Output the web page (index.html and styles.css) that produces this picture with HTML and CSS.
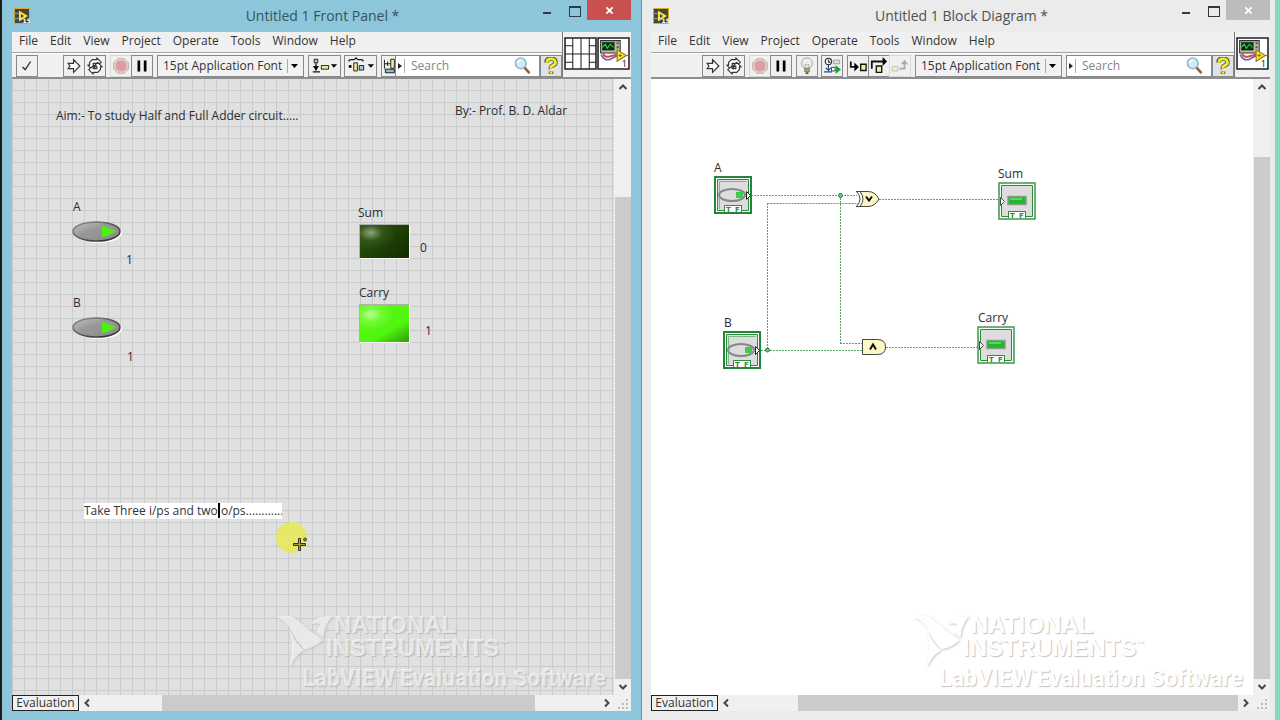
FILE: index.html
```html
<!DOCTYPE html>
<html lang="en">
<head>
<meta charset="utf-8">
<title>Untitled 1</title>
<link rel="stylesheet" href="styles.css">
</head>
<body>
<svg class="defs" aria-hidden="true">
  <defs>
    <linearGradient id="ovalFill" x1="0" y1="0" x2="1" y2="1"><stop offset="0" stop-color="#c4c4c4"/><stop offset=".4" stop-color="#999"/><stop offset="1" stop-color="#8a8a8a"/></linearGradient>
    <linearGradient id="ovalRim" x1="0" y1="0" x2="1" y2="1"><stop offset="0" stop-color="#909090"/><stop offset="1" stop-color="#222"/></linearGradient>
    <symbol id="app" viewBox="0 0 16 16"><path fill="#d9a92c" d="M0 0h16v16H0z"/><path fill="#454437" d="M1 1h14v14H1z"/><path stroke="#5f93a5" stroke-width="1.500" d="M0 5.500h6M0 10.500h6"/><path fill="#f8df4c" d="M5 2.500l9 5.500-9 5.500z"/><path fill="#454437" d="M7 6l3 2-3 2z"/><text x="8.500" y="14.500" class="tiny light">15</text></symbol>
    <symbol id="check" viewBox="0 0 20 20"><path fill="none" stroke="#333" stroke-width="1.500" d="M5 11l3 3 6-9"/></symbol>
    <symbol id="run" viewBox="0 0 20 20"><path fill="#fff" stroke="#333" stroke-width="1.300" d="M3.500 7h6V3l7 7-7 7v-4h-6l2-3z"/></symbol>
    <symbol id="loop" viewBox="0 0 20 20"><g fill="#fff" stroke="#333" stroke-width="1.300" stroke-linejoin="round"><path d="M4 9V6l3-3h5V1l5 5-5 4V7H8v3h3l-4 4-5-5z"/><path d="M16 11v3l-3 3H8v2l-5-5 5-4v3h4v-3H9l4-4 5 5z"/></g></symbol>
    <symbol id="stop" viewBox="0 0 20 20"><path fill="#e6e0e0" stroke="#b09a9a" d="M6.500 2h7L18 6.500v7L13.500 18h-7L2 13.500v-7z"/><path fill="#df9da1" d="M7 4h6l3 3v6l-3 3H7l-3-3V7z"/></symbol>
    <symbol id="pause" viewBox="0 0 20 20"><path d="M5 4h3v12H5zM12 4h3v12h-3z"/></symbol>
    <symbol id="bulb" viewBox="0 0 20 20"><circle cx="10" cy="7" r="6" fill="#f0f0eb" stroke="#9c9c98"/><path fill="none" stroke="#aaa" d="M8 13V8l2 1 2-1v5"/><path fill="#b3a95a" stroke="#77735a" d="M7.500 12.500h5v4h-5z"/><path stroke="#555" stroke-width="2" d="M8.500 18h3"/></symbol>
    <symbol id="retain" viewBox="0 0 20 20"><circle cx="6" cy="5" r="3.500" fill="#fff" stroke="#333" stroke-width="1.300"/><path stroke="#333" d="M6 3v3h2"/><path fill="#ddd" stroke="#999" d="M11.500 3.500h7v4h-7z"/><path fill="none" stroke="#234d9c" stroke-width="1.300" d="M6 9v6M1 16.500h9M3 12l3 3 3-3"/><path fill="#fff" stroke="#333" d="M9.500 11.500h4v4h-4z"/><path fill="#18a33b" d="M14 9l6 5-6 5z"/></symbol>
    <symbol id="into" viewBox="0 0 20 20"><path fill="none" stroke="#111" stroke-width="2" d="M2 5v6h5"/><path d="M6 6l5 5-5 5z"/><path fill="#f4ee9a" stroke="#111" stroke-width="1.500" d="M13 8h6v7h-6z"/></symbol>
    <symbol id="over" viewBox="0 0 20 20"><path fill="none" stroke="#111" stroke-width="2" d="M2 13V5h13"/><path d="M14 0l5 5-5 5z"/><path fill="#f4ee9a" stroke="#111" stroke-width="1.500" d="M7 10h6v7H7z"/></symbol>
    <symbol id="out" viewBox="0 0 20 20"><path fill="none" stroke="#aaa" stroke-width="2" d="M9 13h6V7"/><path fill="#aaa" d="M11 8l4-5 4 5z"/><path fill="#f6f3bd" stroke="#bbb" d="M1.500 10.500h6v5h-6z"/></symbol>
    <symbol id="align" viewBox="0 0 32 20"><path fill="#9ad6d4" stroke="#111" d="M4.500 2.500h4v4h-4z"/><path stroke="#111" stroke-width="1.500" d="M6.500 7v8M3 16.500h8"/><path d="M3 10h7l-3.500 5z"/><path fill="#f4ee9a" stroke="#111" d="M12.500 9.500h8v4h-8z"/><path d="M23 8h7l-3.500 4z"/></symbol>
    <symbol id="dist" viewBox="0 0 32 20"><path fill="none" stroke="#111" stroke-width="1.300" d="M3 5q0-2 3-2h3l2-2 2 2h3q3 0 3 2"/><path d="M3 9h3v3H3z"/><path fill="#f4ee9a" stroke="#111" d="M8.500 6.500h4v9h-4z"/><path fill="#9ad6d4" stroke="#111" d="M14.500 9.500h5v5h-5z"/><path d="M24 8h7l-3.500 4z"/></symbol>
    <symbol id="order" viewBox="0 0 14 20"><path fill="#f4ee9a" stroke="#111" d="M9.500 2.500h4v10h-4z"/><path stroke="#111" d="M2.500 3v10M3 7.500h6M6 5v5"/><path fill="#7fc5cb" stroke="#111" d="M3.500 13.500h10v4h-10z"/></symbol>
    <symbol id="lens" viewBox="0 0 20 20"><path stroke="#9a6034" stroke-width="3" stroke-linecap="round" d="M12 12l4.500 5"/><circle cx="7.500" cy="7" r="6" fill="#cdeafa" stroke="#8caecb" stroke-width="1.500"/><path fill="none" stroke="#fff" stroke-width="2" d="M4.500 7q0-3 3-3"/></symbol>
    <symbol id="help" viewBox="0 0 20 20"><g fill="none" stroke-linejoin="round"><path stroke="#55552c" stroke-width="5" d="M5 6q0-4 5-4t5 4q0 2-3 3.500T10 13M10 16v3"/><path stroke="#f1ec35" stroke-width="3" d="M5.500 6q0-4 4.500-4t5 4q0 2-3 3.500T10 13M10 16.500v2"/></g></symbol>
    <symbol id="pane" viewBox="0 0 32 32"><path fill="#fff" stroke="#222" stroke-width="1.500" d="M1 1h30v30H1z"/><path stroke="#222" d="M8.500 1v30M16.500 1v30M24.500 1v30M1 16.500h30M1 8.500h7M1 24.500h7M25 8.500h6M25 24.500h6"/></symbol>
    <symbol id="vi" viewBox="0 0 32 32"><path fill="#fff" stroke="#222" stroke-width="1.500" d="M1 1h30v30H1z"/><path fill="#bcbca4" stroke="#333" d="M3.500 3.500h19v12h-19z"/><path fill="#092e12" d="M5 5h12v8H5z"/><path fill="none" stroke="#36d34a" d="M5 10l3-3 2 4 3-4 3 3"/><path fill="#555" d="M19 5h2v2h-2zM19 9h2v2h-2z"/><path fill="none" stroke="#5963bd" stroke-width="1.500" d="M4 17q3 6 8 5l8-4"/><path fill="none" stroke="#db4843" stroke-width="2" d="M6 16q1 4 6 3l8-2"/><path stroke="#806310" d="M25 18h6"/><path fill="#f5e52f" stroke="#8d7512" d="M19.500 12.500l9 5.500-9 5.500z"/><path stroke="#806310" d="M21 18h3M22.500 16.500v3"/><text x="24" y="29" class="vinum">1</text></symbol>
    <symbol id="eagle" viewBox="0 0 60 58"><path d="M1 4Q10 0 18 4l30 24q-8 7-18 9Q22 30 15 16 10 7 1 4zM36 11q6-8 17-8h5q-8 9-9 22L42 19l4-8-5-1zM15 19q6 14 14 19-10 6-15 18Q18 38 15 19z"/></symbol>
    <symbol id="oval" viewBox="0 0 52 24"><ellipse cx="27" cy="13" rx="24" ry="10" fill="#fff"/><ellipse cx="25.500" cy="11.500" rx="23.500" ry="9.500" fill="url(#ovalFill)" stroke="url(#ovalRim)" stroke-width="1.500"/><path fill="#4fee12" d="M31 6l5 1 9 4.500-9 4.500-5 1z"/></symbol>
    <symbol id="tf" viewBox="0 0 38 38"><path fill="none" stroke="#2f8a3f" d="M3.500 3.500h31v31h-7v-5h-17v5h-7z"/><path fill="#fff" stroke="#2f8a3f" d="M10.500 36v-6.500h17V36"/><text x="12" y="36" class="tiny green">T</text><text x="21" y="36" class="tiny green">F</text></symbol>
    <symbol id="inNode" viewBox="0 0 38 38"><path fill="#fff" stroke="#23853a" stroke-width="2" d="M1 1h36v36H1z"/><path fill="#deddde" d="M4 4h30v30H4z"/><use href="#tf" width="38" height="38"/><path fill="none" stroke="#75bb7e" d="M5.500 33V5.500h27"/><ellipse cx="18" cy="19" rx="13" ry="6" fill="#ddd" stroke="#888" stroke-width="2"/><path fill="#3fcb4b" d="M22 16h7v6h-7z"/><path fill="#fff" stroke="#222" d="M32.500 15.500l4 4-4 4z"/></symbol>
    <symbol id="outNode" viewBox="0 0 38 38"><path fill="#fafffa" stroke="#3f9649" stroke-width="1.500" d="M1 1h36v36H1z"/><path fill="#deddde" d="M4 4h30v30H4z"/><use href="#tf" width="38" height="38"/><path fill="#22b52e" stroke="#8a9c8a" stroke-width="1.500" d="M10 14.500h18v8H10z"/><path fill="#4be052" d="M12 16h12v2H12z"/><path fill="#fff" stroke="#444" d="M2.500 15.500l4 4-4 4z"/></symbol>
  </defs>
</svg>

<main class="desktop">
  <section class="window front">
    <header class="title">
      <svg class="icon16"><use href="#app"/></svg>
      <h1>Untitled 1 Front Panel *</h1>
      <div class="winbtns">
        <button class="min" aria-label="Minimize"></button><button class="max" aria-label="Maximize"></button><button class="close" aria-label="Close"><svg viewBox="0 0 10 10"><path d="M1.500 1.500l7 7M8.500 1.500l-7 7"/></svg></button>
      </div>
    </header>
    <div class="chrome">
      <div class="bars">
        <nav class="menu"><button>File</button><button>Edit</button><button>View</button><button>Project</button><button>Operate</button><button>Tools</button><button>Window</button><button>Help</button></nav>
        <div class="toolbar">
          <div class="group lead"><button class="tool" aria-label="Confirm"><svg><use href="#check"/></svg></button></div>
          <div class="group"><button class="tool" aria-label="Run"><svg><use href="#run"/></svg></button><button class="tool" aria-label="Run continuously"><svg><use href="#loop"/></svg></button></div>
          <div class="group"><button class="tool flat" aria-label="Abort"><svg><use href="#stop"/></svg></button><button class="tool" aria-label="Pause"><svg><use href="#pause"/></svg></button></div>
          <select class="font" aria-label="Text settings"><option>15pt Application Font</option></select>
          <button class="tool wide" aria-label="Align objects"><svg><use href="#align"/></svg></button>
          <button class="tool wide" aria-label="Distribute objects"><svg><use href="#dist"/></svg></button>
          <div class="group grow"><button class="tool cut" aria-label="Reorder"><svg><use href="#order"/></svg></button><label class="search"><span class="tri"></span><input type="text" placeholder="Search" aria-label="Search"><svg><use href="#lens"/></svg></label><button class="tool helpbtn" aria-label="Context help"><svg><use href="#help"/></svg></button></div>
        </div>
      </div>
      <div class="corner"><svg><use href="#pane"/></svg><svg><use href="#vi"/></svg></div>
    </div>
    <div class="view">
      <div class="canvas grid">
        <span class="note aim">Aim:- To study Half and Full Adder circuit.....</span>
        <span class="note by">By:- Prof. B. D. Aldar</span>
        <span class="note a">A</span>
        <button class="toggle ta" aria-label="A"><svg><use href="#oval"/></svg></button>
        <span class="note av">1</span>
        <span class="note b">B</span>
        <button class="toggle tb" aria-label="B"><svg><use href="#oval"/></svg></button>
        <span class="note bv">1</span>
        <span class="note sum">Sum</span><div class="led off"></div><span class="note sumv">0</span>
        <span class="note carry">Carry</span><div class="led on"></div><span class="note carryv">1</span>
        <input class="edit" type="text" value="Take Three i/ps and two o/ps............" aria-label="Free label">
        <i class="caret"></i>
        <i class="halo"></i>
        <svg class="cursor" viewBox="0 0 15 15"><path fill="#a5a52c" stroke="#333" d="M5.500 1.500h2v5h5v2h-5v5h-2v-5h-5v-2h5z"/><circle cx="12" cy="2.500" r="1.500" fill="#777" stroke="#444"/></svg>
        <div class="mark"><svg><use href="#eagle"/></svg><p class="ni">NATIONAL</p><p class="ni second">INSTRUMENTS<sup>™</sup></p><p class="lv">LabVIEW<sup>™</sup>Evaluation Software</p></div>
      </div>
      <div class="vscroll"><svg class="arr" viewBox="0 0 16 16"><path d="M4.500 10L8 6.500l3.500 3.500"/></svg><div class="track"><div class="gap"></div><div class="thumb"></div></div><svg class="arr" viewBox="0 0 16 16"><path d="M4.500 6L8 9.500 11.500 6"/></svg></div>
    </div>
    <footer class="status"><button class="eval">Evaluation</button><svg class="arr" viewBox="0 0 16 16"><path d="M10 4.500L6.500 8l3.500 3.500"/></svg><div class="track"><div class="gap"></div><div class="thumb"></div><div class="tail"></div></div><svg class="arr" viewBox="0 0 16 16"><path d="M6 4.500L9.500 8 6 11.500"/></svg><svg class="grip" viewBox="0 0 16 16"><path d="M11 4h2v2h-2zM7 8h2v2H7zM11 8h2v2h-2zM3 12h2v2H3zM7 12h2v2H7zM11 12h2v2h-2z"/></svg></footer>
  </section>

  <section class="window block">
    <header class="title">
      <svg class="icon16"><use href="#app"/></svg>
      <h1>Untitled 1 Block Diagram *</h1>
      <div class="winbtns">
        <button class="min" aria-label="Minimize"></button><button class="max" aria-label="Maximize"></button><button class="close" aria-label="Close"><svg viewBox="0 0 10 10"><path d="M1.500 1.500l7 7M8.500 1.500l-7 7"/></svg></button>
      </div>
    </header>
    <div class="chrome">
      <div class="bars">
        <nav class="menu"><button>File</button><button>Edit</button><button>View</button><button>Project</button><button>Operate</button><button>Tools</button><button>Window</button><button>Help</button></nav>
        <div class="toolbar">
          <div class="group indent"><button class="tool" aria-label="Run"><svg><use href="#run"/></svg></button><button class="tool" aria-label="Run continuously"><svg><use href="#loop"/></svg></button></div>
          <div class="group"><button class="tool flat" aria-label="Abort"><svg><use href="#stop"/></svg></button><button class="tool" aria-label="Pause"><svg><use href="#pause"/></svg></button></div>
          <button class="tool" aria-label="Highlight execution"><svg><use href="#bulb"/></svg></button>
          <button class="tool" aria-label="Retain wire values"><svg><use href="#retain"/></svg></button>
          <div class="group"><button class="tool" aria-label="Step into"><svg><use href="#into"/></svg></button><button class="tool" aria-label="Step over"><svg><use href="#over"/></svg></button><button class="tool flat" aria-label="Step out"><svg><use href="#out"/></svg></button></div>
          <select class="font" aria-label="Text settings"><option>15pt Application Font</option></select>
          <div class="group grow"><label class="search"><span class="tri"></span><input type="text" placeholder="Search" aria-label="Search"><svg><use href="#lens"/></svg></label><button class="tool helpbtn" aria-label="Context help"><svg><use href="#help"/></svg></button></div>
        </div>
      </div>
      <div class="corner"><svg><use href="#vi"/></svg></div>
    </div>
    <div class="view">
      <div class="canvas">
        <svg class="diagram" width="400" height="300" viewBox="651 79 400 300">
          <g class="wire"><path d="M751 195.500h106M879 199.500h119M767.500 203.500H858M767.500 203v147M840.500 195v149M840 343.500h22M761 350.500h101M886 347.500h92"/></g>
          <circle class="dot" cx="840.500" cy="195.500" r="2"/><circle class="dot" cx="767.500" cy="350" r="2"/>
          <use href="#inNode" x="714" y="176" width="38" height="38"/>
          <use href="#inNode" x="723" y="331" width="38" height="38"/>
          <use href="#outNode" x="998" y="182" width="38" height="38"/>
          <use href="#outNode" x="977" y="326" width="38" height="38"/>
          <path class="gate" d="M860 191.500h8q7 0 11 7.500-4 7.500-11 7.500h-8q6-7.500 0-15z"/><path class="gateline" d="M856.500 191.500q7 7.500 0 15M856 191.500h4M856 206.500h4"/>
          <path class="glyph" d="M866 196.500l3 4 3-4"/>
          <path class="gate" d="M862.500 339.500h15q8 0 8 7.500t-8 7.500h-15z"/>
          <path class="glyph" d="M870 349.500l3-5 3 5"/>
        </svg>
        <span class="note da">A</span><span class="note db">B</span><span class="note dsum">Sum</span><span class="note dcarry">Carry</span>
        <div class="mark"><svg><use href="#eagle"/></svg><p class="ni">NATIONAL</p><p class="ni second">INSTRUMENTS<sup>™</sup></p><p class="lv">LabVIEW<sup>™</sup>Evaluation Software</p></div>
      </div>
      <div class="vscroll"><svg class="arr" viewBox="0 0 16 16"><path d="M4.500 10L8 6.500l3.500 3.500"/></svg><div class="track"><div class="gap"></div><div class="thumb"></div></div><svg class="arr" viewBox="0 0 16 16"><path d="M4.500 6L8 9.500 11.500 6"/></svg></div>
    </div>
    <footer class="status"><button class="eval">Evaluation</button><svg class="arr" viewBox="0 0 16 16"><path d="M10 4.500L6.500 8l3.500 3.500"/></svg><div class="track"><div class="gap"></div><div class="thumb"></div><div class="tail"></div></div><svg class="arr" viewBox="0 0 16 16"><path d="M6 4.500L9.500 8 6 11.500"/></svg><svg class="grip" viewBox="0 0 16 16"><path d="M11 4h2v2h-2zM7 8h2v2H7zM11 8h2v2h-2zM3 12h2v2H3zM7 12h2v2H7zM11 12h2v2h-2z"/></svg></footer>
  </section>
</main>
</body>
</html>
```
FILE: styles.css
```css
* { box-sizing: border-box; }
body { margin: 0; font: 12px/16px "Open Sans", "Noto Sans", sans-serif; color: #333; }
button, input, select { font: inherit; color: inherit; margin: 0; padding: 0; border: 0; border-radius: 0; background: none; }
svg { display: block; flex: none; }
.defs { position: absolute; width: 0; height: 0; }
.tiny { font: 700 7px "DejaVu Sans", sans-serif; }
.light { font-size: 6px; fill: #fff; }
.green { fill: #2f8a3f; }
.vinum { font: 9px "Open Sans", sans-serif; fill: #111; }

.desktop { display: flex; min-height: 100vh; padding: 0 5px 0 2px; background: linear-gradient(90deg, #1f1c1b 50%, #86d8c2 50%); }
.window { flex: 1; min-width: 0; display: flex; flex-direction: column; padding: 0 10px 9px; }
.front { background: #8dc6da; border-right: 1px solid #6499ac; }
.block { background: #ebebeb; padding: 0 5px 9px 9px; }

.title { display: grid; grid-template-columns: 1fr auto 1fr; height: 32px; align-items: center; padding-left: 2px; padding-bottom: 1px; }
.title h1 { margin: 0; font-size: 14px; font-weight: 400; line-height: 20px; color: #36525d; }
.block h1 { color: #505050; }
.icon16 { width: 16px; height: 16px; }
.winbtns { display: flex; justify-content: flex-end; align-self: start; }
.winbtns button { position: relative; width: 27px; height: 20px; }
.winbtns .min::after { content: ""; position: absolute; left: 10px; top: 12px; width: 8px; height: 2px; background: #2d3b40; }
.winbtns .max::after { content: ""; position: absolute; left: 9px; top: 6px; width: 10px; height: 8px; border: 1px solid #2d3b40; border-top-width: 2px; }
.winbtns .close { width: 44px; display: grid; place-items: center; background: #c8504f; }
.block .close { background: #bcbcbc; }
.close svg { width: 9px; height: 9px; fill: none; stroke: #fff; stroke-width: 2; }

.chrome { display: flex; height: 47px; background: #f0f0f0; border-bottom: 2px solid #8e8e8e; }
.bars { flex: 1; min-width: 0; display: flex; flex-direction: column; }
.menu { display: flex; gap: 12px; height: 21px; padding: 0 0 2px 7px; border-bottom: 1px solid #a0a0a0; align-items: center; }
.menu button { line-height: 18px; }
.toolbar { flex: 1; display: flex; gap: 4px; align-items: center; padding-left: 4px; border-top: 1px solid #fff; }
.group { display: flex; }
.lead { width: 43px; }
.indent { margin-left: 47px; }
.grow { flex: 1; min-width: 0; }
.tool { width: 22px; height: 22px; border: 1px solid #898989; display: grid; place-items: center; flex: none; }
.tool + .tool { margin-left: -1px; }
.tool svg { width: 18px; height: 18px; }
.tool.flat { border-color: #d9d9d9; }
.tool.wide { width: 33px; }
.tool.wide svg { width: 31px; }
.tool.cut { width: 14px; border-right: 0; }
.tool.cut svg { width: 13px; }
.font { appearance: none; flex: none; width: 147px; height: 22px; padding-left: 5px; border: 1px solid #898989; background: linear-gradient(#aaa, #aaa) 129px 3px / 1px 14px no-repeat, url("data:image/svg+xml,%3Csvg xmlns='http://www.w3.org/2000/svg' width='7' height='4'%3E%3Cpath d='M0 0h7L3.500 4z'/%3E%3C/svg%3E") 133px 8px no-repeat, #f2f2f2; }
.search { flex: 1; min-width: 0; display: flex; align-items: center; height: 22px; border: 1px solid #898989; background: #fff; padding-right: 7px; }
.tri { width: 9px; height: 14px; border-right: 1px solid #aaa; display: grid; place-items: center; }
.tri::before { content: ""; border: 3px solid transparent; border-left: 4px solid #222; border-right: 0; }
.search input { flex: 1; min-width: 0; padding-left: 6px; outline: 0; }
.search input::placeholder { color: #858585; opacity: 1; }
.search svg { width: 18px; height: 18px; }
.helpbtn { background: #e2e2e2; margin-left: 0; }
.corner { display: flex; padding: 5px 1px 0; border-left: 1px solid #777; }
.corner svg { width: 33px; height: 33px; }

.view { flex: 1; display: flex; min-height: 0; }
.canvas { position: relative; flex: 1; min-width: 0; background-color: #fff; overflow: hidden; }
.grid { background: linear-gradient(#cacccc 1px, transparent 1px) 0 11px / 12px 12px, linear-gradient(90deg, #cacccc 1px, transparent 1px) 0 0 / 12px 12px, #e0e0e0; }
.note { position: absolute; white-space: nowrap; color: #2c2c2c; }
.aim { left: 44px; top: 29px; }
.by { left: 443px; top: 24px; }
.a { left: 61px; top: 120px; }
.ta { left: 59px; top: 141px; }
.av { left: 114px; top: 173px; }
.b { left: 61px; top: 216px; }
.tb { left: 59px; top: 237px; }
.bv { left: 115px; top: 270px; }
.sum { left: 346px; top: 126px; }
.sumv { left: 408px; top: 161px; }
.carry { left: 347px; top: 206px; }
.carryv { left: 413px; top: 244px; }
.toggle { position: absolute; }
.toggle svg { width: 52px; height: 24px; }
.led { position: absolute; left: 347px; width: 51px; border: 1px solid; border-color: #b0b0b0 #fff #fff #b0b0b0; }
.off { top: 145px; height: 35px; background: radial-gradient(ellipse at 22% 24%, #8fa47d 0, #3c5e22a0 22%, transparent 48%), linear-gradient(135deg, #2c5510, #1c3d05 60%, #142d03); }
.on { top: 225px; height: 39px; background: radial-gradient(ellipse at 22% 26%, #baff95 0, #7dff40a0 20%, transparent 42%), linear-gradient(150deg, #5af50f 20%, #50f510 65%, #2f9d06); }
.edit { position: absolute; left: 72px; top: 424px; width: 198px; height: 16px; background: #fff; outline: 0; }
.caret { position: absolute; left: 206px; top: 424px; width: 2px; height: 15px; background: #000; }
.halo { position: absolute; left: 264px; top: 443px; width: 31px; height: 31px; border-radius: 50%; background: #e8e84c; opacity: .8; }
.cursor { position: absolute; left: 281px; top: 458px; width: 15px; height: 15px; }

.mark { position: absolute; right: 8px; bottom: 2px; width: 330px; height: 80px; color: #ffffffa0; font-family: "Liberation Sans", Arial, sans-serif; font-weight: 700; text-shadow: 1px 1px 1px #a8a8a8b0; }
.block .mark { right: 10px; color: #fff; }
.mark svg { position: absolute; left: 0; top: 0; width: 58px; height: 57px; fill: #f4f4f4c0; filter: drop-shadow(1px 1px 1px #9998); }
.block .mark svg { fill: #fff; }
.mark p { margin: 0; white-space: nowrap; }
.ni { padding-left: 58px; font-size: 24px; line-height: 23px; }
.second { padding-left: 50px; }
.mark sup { font-size: 8px; line-height: 0; vertical-align: 10px; }
.lv { padding-top: 6px; text-align: right; font-family: "Liberation Sans Narrow", Roboto, sans-serif; font-size: 23px; line-height: 28px; }

.diagram { position: absolute; left: 0; top: 0; }
.wire { fill: none; stroke: #57a563; stroke-dasharray: 2 1; }
.dot { fill: #7ac58a; stroke: #248039; }
.gate { fill: #fbf8c5; stroke: #444; }
.gateline { fill: none; stroke: #444; }
.glyph { fill: none; stroke: #111; stroke-width: 2; }
.da { left: 63px; top: 81px; }
.db { left: 73px; top: 236px; }
.dsum { left: 347px; top: 87px; }
.dcarry { left: 327px; top: 231px; }

.vscroll { width: 17px; display: flex; flex-direction: column; padding-left: 1px; background: #f0f0f0; }
.arr { width: 16px; height: 16px; fill: none; stroke: #444; stroke-width: 2; }
.track { flex: 1; display: flex; }
.vscroll .track { flex-direction: column; }
.thumb { background: #cbcbcc; }
.front .vscroll .gap { flex: 102; }
.front .vscroll .thumb { flex: 482; }
.block .vscroll .gap { flex: 62; }
.block .vscroll .thumb { flex: 522; }
.status { display: flex; height: 16px; background: #f0f0f0; }
.eval { width: 67px; border: 1px solid #222; line-height: 14px; }
.front .status .gap { flex: 67; }
.front .status .thumb { flex: 372; }
.front .status .tail { flex: 64; }
.block .status .gap { flex: 64; }
.block .status .thumb { flex: 439; }
.grip { width: 16px; height: 16px; fill: #bbb; }
```
